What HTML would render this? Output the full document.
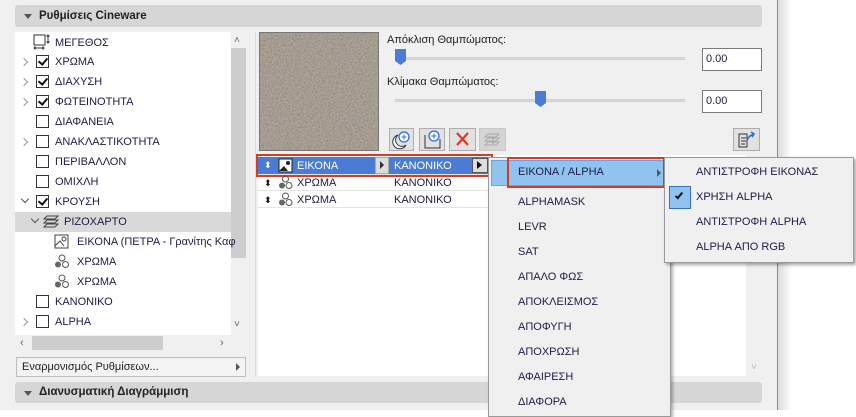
<!DOCTYPE html>
<html><head><meta charset="utf-8"><style>
*{margin:0;padding:0;box-sizing:border-box}
body{width:856px;height:410px;overflow:hidden;background:#fff;font-family:"Liberation Sans","DejaVu Sans",sans-serif;font-size:11px;color:#1c1c44;position:relative}
.a{position:absolute}
.panel{left:0;top:0;width:778px;height:410px;background:#f0f0f0;border-right:1px solid #8a8a8a}
.shadow{left:778px;top:0;width:14px;height:410px;background:linear-gradient(to right,#dcdcdc,#fff)}
.hdr{background:#d6d6d6;border-radius:3px;font-weight:bold;font-size:11.5px;color:#222;padding-left:24px;line-height:22px}
.hdr:before{content:"";position:absolute;left:9px;top:9px;border-left:4px solid transparent;border-right:4px solid transparent;border-top:5px solid #555}
.t{position:absolute;white-space:nowrap;line-height:14px}
.cb{position:absolute;width:13px;height:13px;border:1px solid #333;background:#fff}
.cb.k:after{content:"";position:absolute;left:3px;top:0px;width:4px;height:7px;border:solid #111;border-width:0 2px 2px 0;transform:rotate(40deg)}
.chev{position:absolute;width:6px;height:6px;border:solid #999;border-width:0 1.3px 1.3px 0;transform:rotate(-45deg)}
.chev.d{transform:rotate(45deg);border-color:#555}
.btn{position:absolute;top:128px;height:23px;border:1px solid #adadad;background:#e1e1e1}
.inp{position:absolute;left:702px;width:60px;height:23px;border:1px solid #7a7a7a;background:#fff;padding-left:3px;line-height:21px;font-size:11px}
.track{position:absolute;left:395px;width:290px;height:3px;background:#dcdcdc;border:1px solid #d0d0d0}
.thumb{position:absolute;width:11px;height:16px;background:#4a7bd6;clip-path:polygon(0 0,100% 0,100% 75%,50% 100%,0 75%)}
.mi{position:absolute;left:518px;white-space:nowrap;font-size:11px}
.si{position:absolute;left:696px;white-space:nowrap;font-size:11px}
</style></head><body>
<div class="a panel"></div>
<div class="a shadow"></div>
<div class="a hdr" style="left:15px;top:5px;width:747px;height:22px;">Ρυθμίσεις Cineware</div>

<!-- tree -->
<div class="a" style="left:15px;top:32px;width:216px;height:303px;background:#fff"></div>
<div class="a" style="left:15px;top:212px;width:216px;height:20px;background:#d9d9d9"></div>
<div class="a" style="left:231px;top:32px;width:15px;height:303px;background:#f0f0f0"></div>
<div class="a" style="left:231px;top:48px;width:15px;height:210px;background:#cdcdcd"></div>
<div class="t" style="left:234px;top:34px;color:#666;font-size:10px">&#x2C4;</div>
<div class="t" style="left:234px;top:318px;color:#666;font-size:10px">&#x2C5;</div>
<div class="a" style="left:15px;top:335px;width:216px;height:15px;background:#f0f0f0"></div>
<div class="a" style="left:32px;top:336px;width:131px;height:14px;background:#cdcdcd"></div>
<div class="t" style="left:20px;top:336px;color:#666">&lsaquo;</div>
<div class="t" style="left:220px;top:336px;color:#666">&rsaquo;</div>

<svg class="a" style="left:33px;top:34px" width="18" height="16"><rect x="1" y="1" width="11" height="10" fill="none" stroke="#333"/><path d="M15 1v8M13.5 2.5L15 1l1.5 1.5M13.5 7.5L15 9l1.5-1.5M1 14h10M2.5 12.5L1 14l1.5 1.5M9.5 12.5L11 14l-1.5 1.5" stroke="#333" fill="none"/></svg>
<div class="t" style="left:55px;top:36px">ΜΕΓΕΘΟΣ</div>

<div class="chev" style="left:21px;top:59px"></div><div class="cb k" style="left:36px;top:55px"></div><div class="t" style="left:55px;top:55px">ΧΡΩΜΑ</div>
<div class="chev" style="left:21px;top:79px"></div><div class="cb k" style="left:36px;top:75px"></div><div class="t" style="left:55px;top:75px">ΔΙΑΧΥΣΗ</div>
<div class="chev" style="left:21px;top:99px"></div><div class="cb k" style="left:36px;top:95px"></div><div class="t" style="left:55px;top:95px">ΦΩΤΕΙΝΟΤΗΤΑ</div>
<div class="cb" style="left:36px;top:115px"></div><div class="t" style="left:55px;top:115px">ΔΙΑΦΑΝΕΙΑ</div>
<div class="chev" style="left:21px;top:139px"></div><div class="cb" style="left:36px;top:135px"></div><div class="t" style="left:55px;top:135px">ΑΝΑΚΛΑΣΤΙΚΟΤΗΤΑ</div>
<div class="cb" style="left:36px;top:155px"></div><div class="t" style="left:55px;top:155px">ΠΕΡΙΒΑΛΛΟΝ</div>
<div class="cb" style="left:36px;top:175px"></div><div class="t" style="left:55px;top:175px">ΟΜΙΧΛΗ</div>
<div class="chev d" style="left:22px;top:196px"></div><div class="cb k" style="left:36px;top:195px"></div><div class="t" style="left:55px;top:195px">ΚΡΟΥΣΗ</div>
<div class="chev d" style="left:32px;top:216px"></div>
<svg class="a" style="left:43px;top:214px" width="16" height="15"><path d="M4 2h11l-3 3H1zM4 6h11l-3 3H1zM4 10h11l-3 3H1z" fill="none" stroke="#444"/></svg>
<div class="t" style="left:64px;top:215px">ΡΙΖΟΧΑΡΤΟ</div>
<svg class="a" style="left:54px;top:234px" width="16" height="15"><rect x="1" y="1" width="13" height="13" fill="none" stroke="#444"/><circle cx="10" cy="5" r="2" fill="none" stroke="#444"/><path d="M1 12l5-5 4 5" fill="none" stroke="#444"/></svg>
<div class="t" style="left:77px;top:235px">ΕΙΚΟΝΑ (ΠΕΤΡΑ - Γρανίτης Καφ</div>
<svg class="a" style="left:54px;top:254px" width="16" height="15"><circle cx="8" cy="4" r="3" fill="none" stroke="#555"/><circle cx="4" cy="10.5" r="3" fill="#666"/><circle cx="11.5" cy="10.5" r="3" fill="none" stroke="#555"/></svg>
<div class="t" style="left:77px;top:255px">ΧΡΩΜΑ</div>
<svg class="a" style="left:54px;top:274px" width="16" height="15"><circle cx="8" cy="4" r="3" fill="none" stroke="#555"/><circle cx="4" cy="10.5" r="3" fill="#666"/><circle cx="11.5" cy="10.5" r="3" fill="none" stroke="#555"/></svg>
<div class="t" style="left:77px;top:275px">ΧΡΩΜΑ</div>
<div class="cb" style="left:36px;top:295px"></div><div class="t" style="left:55px;top:295px">ΚΑΝΟΝΙΚΟ</div>
<div class="chev" style="left:21px;top:319px"></div><div class="cb" style="left:36px;top:315px"></div><div class="t" style="left:55px;top:315px">ALPHA</div>

<div class="a" style="left:16px;top:357px;width:230px;height:20px;border:1px solid #bdbdbd;background:#f3f3f3"></div>
<div class="t" style="left:22px;top:360px;color:#222">Εναρμονισμός Ρυθμίσεων...</div>
<div class="a" style="left:236px;top:363px;border-top:4px solid transparent;border-bottom:4px solid transparent;border-left:4px solid #555"></div>

<div class="a hdr" style="left:15px;top:382px;width:747px;height:21px;line-height:21px">Διανυσματική Διαγράμμιση</div>

<!-- right -->
<div class="a" style="left:255px;top:32px;width:1px;height:345px;background:#dcdcdc"></div>
<svg class="a" style="left:259px;top:32px" width="120" height="119">
<defs>
<filter id="n" x="0" y="0" width="100%" height="100%"><feTurbulence type="fractalNoise" baseFrequency="0.6" numOctaves="2" seed="3"/><feColorMatrix values="0.9 0 0 0 0.12  0.9 0 0 0 0.08  0.9 0 0 0 0.04  0 0 0 0 0.45"/></filter>
<filter id="m" x="0" y="0" width="100%" height="100%"><feTurbulence type="fractalNoise" baseFrequency="0.04" numOctaves="3" seed="7"/><feColorMatrix values="0 0 0 0 0.35  0 0 0 0 0.33  0 0 0 0 0.35  1.5 0 0 0 -0.6"/></filter>
</defs>
<rect width="120" height="119" fill="#8a7d6c"/>
<rect width="120" height="119" filter="url(#n)"/>
<rect width="120" height="119" filter="url(#m)" opacity="0.5"/>
<rect x="0.5" y="0.5" width="119" height="118" fill="none" stroke="#777"/>
</svg>
<div class="t" style="left:387px;top:33px;color:#222">Απόκλιση Θαμπώματος:</div>
<div class="track" style="top:57px"></div><div class="thumb" style="left:395px;top:49px"></div>
<div class="inp" style="top:48px">0.00</div>
<div class="t" style="left:387px;top:75px;color:#222">Κλίμακα Θαμπώματος:</div>
<div class="track" style="top:99px"></div><div class="thumb" style="left:535px;top:91px"></div>
<div class="inp" style="top:90px">0.00</div>

<div class="btn" style="left:389px;width:25px"><svg width="23" height="21"><path d="M8 6a7 7 0 1 0 8 10 6 6 0 0 1-8-10z" fill="#fff" stroke="#333"/><circle cx="14" cy="8" r="5" fill="#fff" stroke="#2a6ee0" stroke-width="1.3"/><path d="M14 5.5v5M11.5 8h5" stroke="#2a6ee0"/></svg></div>
<div class="btn" style="left:419px;width:26px"><svg width="24" height="21"><path d="M5 6v13h15V10" fill="none" stroke="#333"/><circle cx="14" cy="7" r="5" fill="#fff" stroke="#2a6ee0" stroke-width="1.3"/><path d="M14 4.5v5M11.5 7h5" stroke="#2a6ee0"/></svg></div>
<div class="btn" style="left:449px;width:27px"><svg width="25" height="21"><path d="M7 4l11 12M18 4L7 16" stroke="#e8341c" stroke-width="2.2"/></svg></div>
<div class="btn" style="left:479px;width:27px;background:#d4d4d4;border-color:#c8c8c8"><svg width="25" height="21"><path d="M8 5h11l-3 3H5zM8 9h11l-3 3H5zM8 13h11l-3 3H5z" fill="none" stroke="#aaa"/><path d="M13 15V8" stroke="#8ab" /></svg></div>
<div class="btn" style="left:733px;width:27px"><svg width="25" height="21"><path d="M5 5h8v13H5zM7 9h5M7 12h5M7 15h4" fill="none" stroke="#333"/><path d="M13 11c2-4 4-5 7-6M17 3l3 2-2 3" fill="none" stroke="#2a6ee0" stroke-width="1.6"/></svg></div>

<!-- list -->
<div class="a" style="left:258px;top:155px;width:488px;height:221px;background:#fff"></div>
<div class="t" style="left:751px;top:361px;color:#bbb;font-size:10px">&#x2C5;</div>
<div class="a" style="left:258px;top:174px;width:232px;height:1px;background:#e4e4e4"></div>
<div class="a" style="left:258px;top:190px;width:232px;height:1px;background:#e4e4e4"></div>
<div class="a" style="left:258px;top:207px;width:232px;height:1px;background:#e4e4e4"></div>
<div class="a" style="left:258px;top:157px;width:232px;height:17px;background:#4a7bd6"></div>
<div class="a" style="left:375px;top:157px;width:14px;height:17px;background:#dcdcdc;border:1px solid #aaa"></div>
<div class="a" style="left:380px;top:161px;border-top:4px solid transparent;border-bottom:4px solid transparent;border-left:4px solid #333"></div>
<div class="a" style="left:472px;top:158px;width:16px;height:15px;background:#ddd;border:1px solid #555"></div>
<div class="a" style="left:477px;top:161px;border-top:4px solid transparent;border-bottom:4px solid transparent;border-left:5px solid #111"></div>
<div class="a" style="left:256px;top:154px;width:237px;height:23px;border:2px solid #d83a22"></div>
<div class="t" style="left:264px;top:158px;color:#fff;font-size:9px">&#x2B0D;</div>
<svg class="a" style="left:278px;top:158px" width="15" height="15"><rect x="1" y="1" width="13" height="13" fill="#fff" stroke="#222"/><circle cx="10" cy="5" r="2" fill="#222"/><path d="M1 13l5-5 4 5" fill="#222"/></svg>
<div class="t" style="left:297px;top:159px;color:#fff">ΕΙΚΟΝΑ</div>
<div class="t" style="left:394px;top:159px;color:#fff">ΚΑΝΟΝΙΚΟ</div>
<div class="t" style="left:264px;top:176px;color:#111;font-size:9px">&#x2B0D;</div>
<svg class="a" style="left:278px;top:175px" width="15" height="15"><circle cx="7.5" cy="4" r="3" fill="none" stroke="#555"/><circle cx="4" cy="10.5" r="3" fill="#666"/><circle cx="11" cy="10.5" r="3" fill="none" stroke="#555"/></svg>
<div class="t" style="left:297px;top:176px">ΧΡΩΜΑ</div><div class="t" style="left:394px;top:176px">ΚΑΝΟΝΙΚΟ</div>
<div class="t" style="left:264px;top:193px;color:#111;font-size:9px">&#x2B0D;</div>
<svg class="a" style="left:278px;top:192px" width="15" height="15"><circle cx="7.5" cy="4" r="3" fill="none" stroke="#555"/><circle cx="4" cy="10.5" r="3" fill="#666"/><circle cx="11" cy="10.5" r="3" fill="none" stroke="#555"/></svg>
<div class="t" style="left:297px;top:193px">ΧΡΩΜΑ</div><div class="t" style="left:394px;top:193px">ΚΑΝΟΝΙΚΟ</div>

<!-- menu -->
<div class="a" style="left:488px;top:157px;width:183px;height:260px;background:#f0f0f0;border:1px solid #999;box-shadow:2px 2px 3px rgba(0,0,0,.3)"></div>
<div class="a" style="left:491px;top:160px;width:173px;height:26px;background:#91c3f1;border:1px solid #6aa2dd"></div>
<div class="a" style="left:507px;top:157px;width:158px;height:31px;border:2px solid #d83a22"></div>
<div class="mi" style="top:166px">ΕΙΚΟΝΑ / ALPHA</div>
<div class="a" style="left:657px;top:169px;border-top:4px solid transparent;border-bottom:4px solid transparent;border-left:4px solid #555"></div>
<div class="mi" style="top:196px">ALPHAMASK</div>
<div class="mi" style="top:221px">LEVR</div>
<div class="mi" style="top:246px">SAT</div>
<div class="mi" style="top:271px">ΑΠΑΛΟ ΦΩΣ</div>
<div class="mi" style="top:296px">ΑΠΟΚΛΕΙΣΜΟΣ</div>
<div class="mi" style="top:321px">ΑΠΟΦΥΓΗ</div>
<div class="mi" style="top:346px">ΑΠΟΧΡΩΣΗ</div>
<div class="mi" style="top:371px">ΑΦΑΙΡΕΣΗ</div>
<div class="mi" style="top:396px">ΔΙΑΦΟΡΑ</div>

<!-- submenu -->
<div class="a" style="left:664px;top:157px;width:190px;height:106px;background:#f0f0f0;border:1px solid #999;box-shadow:2px 2px 3px rgba(0,0,0,.35)"></div>
<div class="si" style="top:166px">ΑΝΤΙΣΤΡΟΦΗ ΕΙΚΟΝΑΣ</div>
<div class="a" style="left:669px;top:186px;width:22px;height:23px;background:#91c3f1;border:1px solid #3c6fc4"></div>
<div class="a" style="left:677px;top:191px;width:4px;height:8px;border:solid #111;border-width:0 2px 2px 0;transform:rotate(40deg)"></div>
<div class="si" style="top:191px">ΧΡΗΣΗ ALPHA</div>
<div class="si" style="top:216px">ΑΝΤΙΣΤΡΟΦΗ ALPHA</div>
<div class="si" style="top:241px">ALPHA ΑΠΟ RGB</div>
</body></html>
